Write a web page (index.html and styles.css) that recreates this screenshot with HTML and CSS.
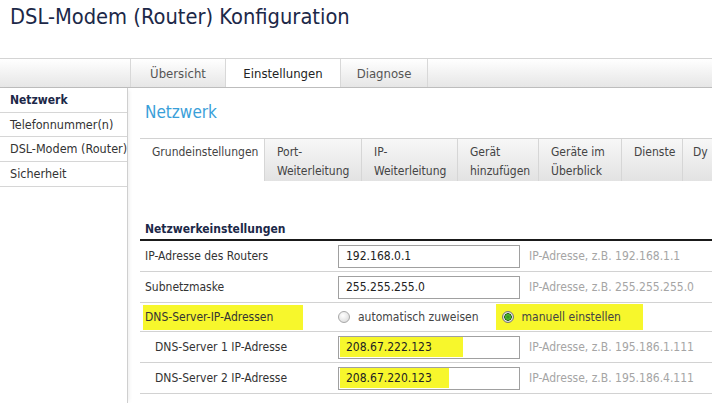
FILE: index.html
```html
<!DOCTYPE html>
<html lang="de">
<head>
<meta charset="utf-8">
<title>DSL-Modem (Router) Konfiguration</title>
<link rel="stylesheet" href="styles.css">
</head>
<body>
<header class="header">
  <h1 class="title">DSL-Modem (Router) Konfiguration</h1>
</header>
<nav class="topnav">
  <div class="topnav-spacer"></div>
  <a class="toptab">Übersicht</a>
  <a class="toptab active">Einstellungen</a>
  <a class="toptab">Diagnose</a>
</nav>
<div class="main">
  <aside class="sidebar">
    <div class="side-item active">Netzwerk</div>
    <div class="side-item">Telefonnummer(n)</div>
    <div class="side-item">DSL-Modem (Router)</div>
    <div class="side-item">Sicherheit</div>
  </aside>
  <section class="content">
    <h2 class="heading">Netzwerk</h2>
    <div class="subtabs">
      <div class="subtab active w1">Grundeinstellungen</div>
      <div class="subtab w2">Port-<br>Weiterleitung</div>
      <div class="subtab w3">IP-<br>Weiterleitung</div>
      <div class="subtab w4">Gerät<br>hinzufügen</div>
      <div class="subtab w5">Geräte im<br>Überblick</div>
      <div class="subtab w6">Dienste</div>
      <div class="subtab w7">Dy</div>
    </div>
    <h3 class="section-title">Netzwerkeinstellungen</h3>
    <div class="form">
      <div class="row">
        <div class="label">IP-Adresse des Routers</div>
        <div class="field">192.168.0.1</div>
        <div class="hint">IP-Adresse, z.B. 192.168.1.1</div>
      </div>
      <div class="row">
        <div class="label">Subnetzmaske</div>
        <div class="field">255.255.255.0</div>
        <div class="hint">IP-Adresse, z.B. 255.255.255.0</div>
      </div>
      <div class="row row-radio">
        <div class="label"><span class="mark mark-label">DNS-Server-IP-Adressen</span></div>
        <div class="radio-group">
          <span class="radio-opt"><span class="radio"></span>automatisch zuweisen</span>
          <span class="radio-opt mark mark-radio"><span class="radio checked"></span>manuell einstellen</span>
        </div>
      </div>
      <div class="row">
        <div class="label sub">DNS-Server 1 IP-Adresse</div>
        <div class="field"><span class="mark mark-f1">208.67.222.123</span></div>
        <div class="hint">IP-Adresse, z.B. 195.186.1.111</div>
      </div>
      <div class="row">
        <div class="label sub">DNS-Server 2 IP-Adresse</div>
        <div class="field"><span class="mark mark-f2">208.67.220.123</span></div>
        <div class="hint">IP-Adresse, z.B. 195.186.4.111</div>
      </div>
    </div>
  </section>
</div>
</body>
</html>
```
FILE: styles.css
```css
* { box-sizing: border-box; }
html, body { margin: 0; padding: 0; background: #fff; }
body {
  font-family: "DejaVu Sans Condensed", "DejaVu Sans", sans-serif;
  font-size: 12px;
  color: #333;
  width: 712px;
  height: 403px;
  overflow: hidden;
}
.header { height: 58px; padding: 4px 0 0 10px; }
.title {
  margin: 0;
  font-size: 21.7px;
  font-weight: normal;
  color: #1c2848;
  line-height: 26px;
}
.topnav {
  display: flex;
  height: 30px;
  border-top: 1px solid #d4d4d4;
  border-bottom: 1px solid #bdbdbd;
  background: linear-gradient(#ffffff, #e6e6e6);
}
.topnav-spacer { width: 130px; }
.toptab {
  display: flex;
  align-items: center;
  justify-content: center;
  font-size: 13px;
  color: #555;
  border-left: 1px solid #d8d8d8;
}
.toptab:nth-child(2) { width: 95px; }
.toptab:nth-child(3) { width: 115px; }
.toptab:nth-child(4) { width: 88px; border-right: 1px solid #d8d8d8; }
.toptab.active { background: #fff; color: #222; }
.main { display: flex; height: 315px; }
.sidebar {
  width: 128px;
  flex: none;
  border-right: 1px solid #cfcfcf;
  box-shadow: 3px 0 4px -2px rgba(0,0,0,0.08);
}
.side-item {
  height: 24.7px;
  line-height: 24px;
  padding-left: 10px;
  font-size: 12.5px;
  color: #333;
  border-bottom: 1px solid #d6d6d6;
  white-space: nowrap;
}
.side-item.active { font-weight: bold; color: #1c2848; font-size: 12px; }
.content { flex: 1; padding-left: 12px; min-width: 0; }
.heading {
  margin: 0;
  height: 50px;
  padding: 13px 0 0 5px;
  font-size: 17px;
  font-weight: normal;
  color: #3a9fd9;
  line-height: 22px;
}
.subtabs {
  display: flex;
  height: 43px;
  border-top: 1px solid #d2d2d2;
  overflow: hidden;
  white-space: nowrap;
}
.subtab {
  flex: none;
  padding: 4px 0 0 12px;
  line-height: 19px;
  font-size: 12px;
  color: #444;
  border-right: 1px solid #d6d6d6;
  background: linear-gradient(#f7f7f7, #e2e2e2);
}
.subtab.active { background: #fff; }
.w1 { width: 125px; }
.w2 { width: 97px; }
.w3 { width: 96px; }
.w4 { width: 81px; }
.w5 { width: 83px; }
.w6 { width: 61px; }
.w7 { width: 29px; padding-left: 10px; border-right: none; }
.section-title {
  margin: 0;
  height: 60px;
  padding: 40px 0 0 5px;
  font-size: 12px;
  font-weight: bold;
  color: #1c2848;
  line-height: 16px;
  border-bottom: 2px solid #1a1a1a;
}
.row {
  display: flex;
  align-items: center;
  height: 31px;
  border-bottom: 1px solid #d2d2d2;
}
.row-radio { height: 29px; }
.label { width: 198px; flex: none; padding-left: 5px; color: #333; }
.label.sub { padding-left: 15px; }
.field {
  width: 182px;
  height: 23px;
  flex: none;
  border: 1px solid #a0a0a0;
  padding: 0 0 0 7px;
  line-height: 21px;
  color: #222;
}
.hint { padding-left: 9px; color: #a5a5a5; white-space: nowrap; }
.radio-group { display: flex; align-items: center; }
.radio-opt { display: inline-flex; align-items: center; color: #444; }
.radio {
  width: 12px;
  height: 12px;
  border-radius: 50%;
  border: 1px solid #a8a8a8;
  background: radial-gradient(circle at 40% 35%, #ffffff, #d6d6d6);
  margin: 0 8px 0 0;
}
.radio.checked {
  background: radial-gradient(circle, #2e8b1f 0, #4fb830 2.5px, #1f5a14 3.5px, #e8e8e8 4px, #cfcfcf 6px);
  border-color: #777;
}
.mark { background: #f7f72c; }
.mark-label { padding: 5px 30px 6px 2px; margin-left: -2px; }
.mark-radio { margin-left: 17px; padding: 6px 22px 6px 6px; }
.field .mark {
  display: inline-block;
  height: 20px;
  line-height: 20px;
  margin-left: -6px;
  padding-left: 6px;
  vertical-align: top;
}
.mark-f1 { width: 123px; }
.mark-f2 { width: 109px; }
```
